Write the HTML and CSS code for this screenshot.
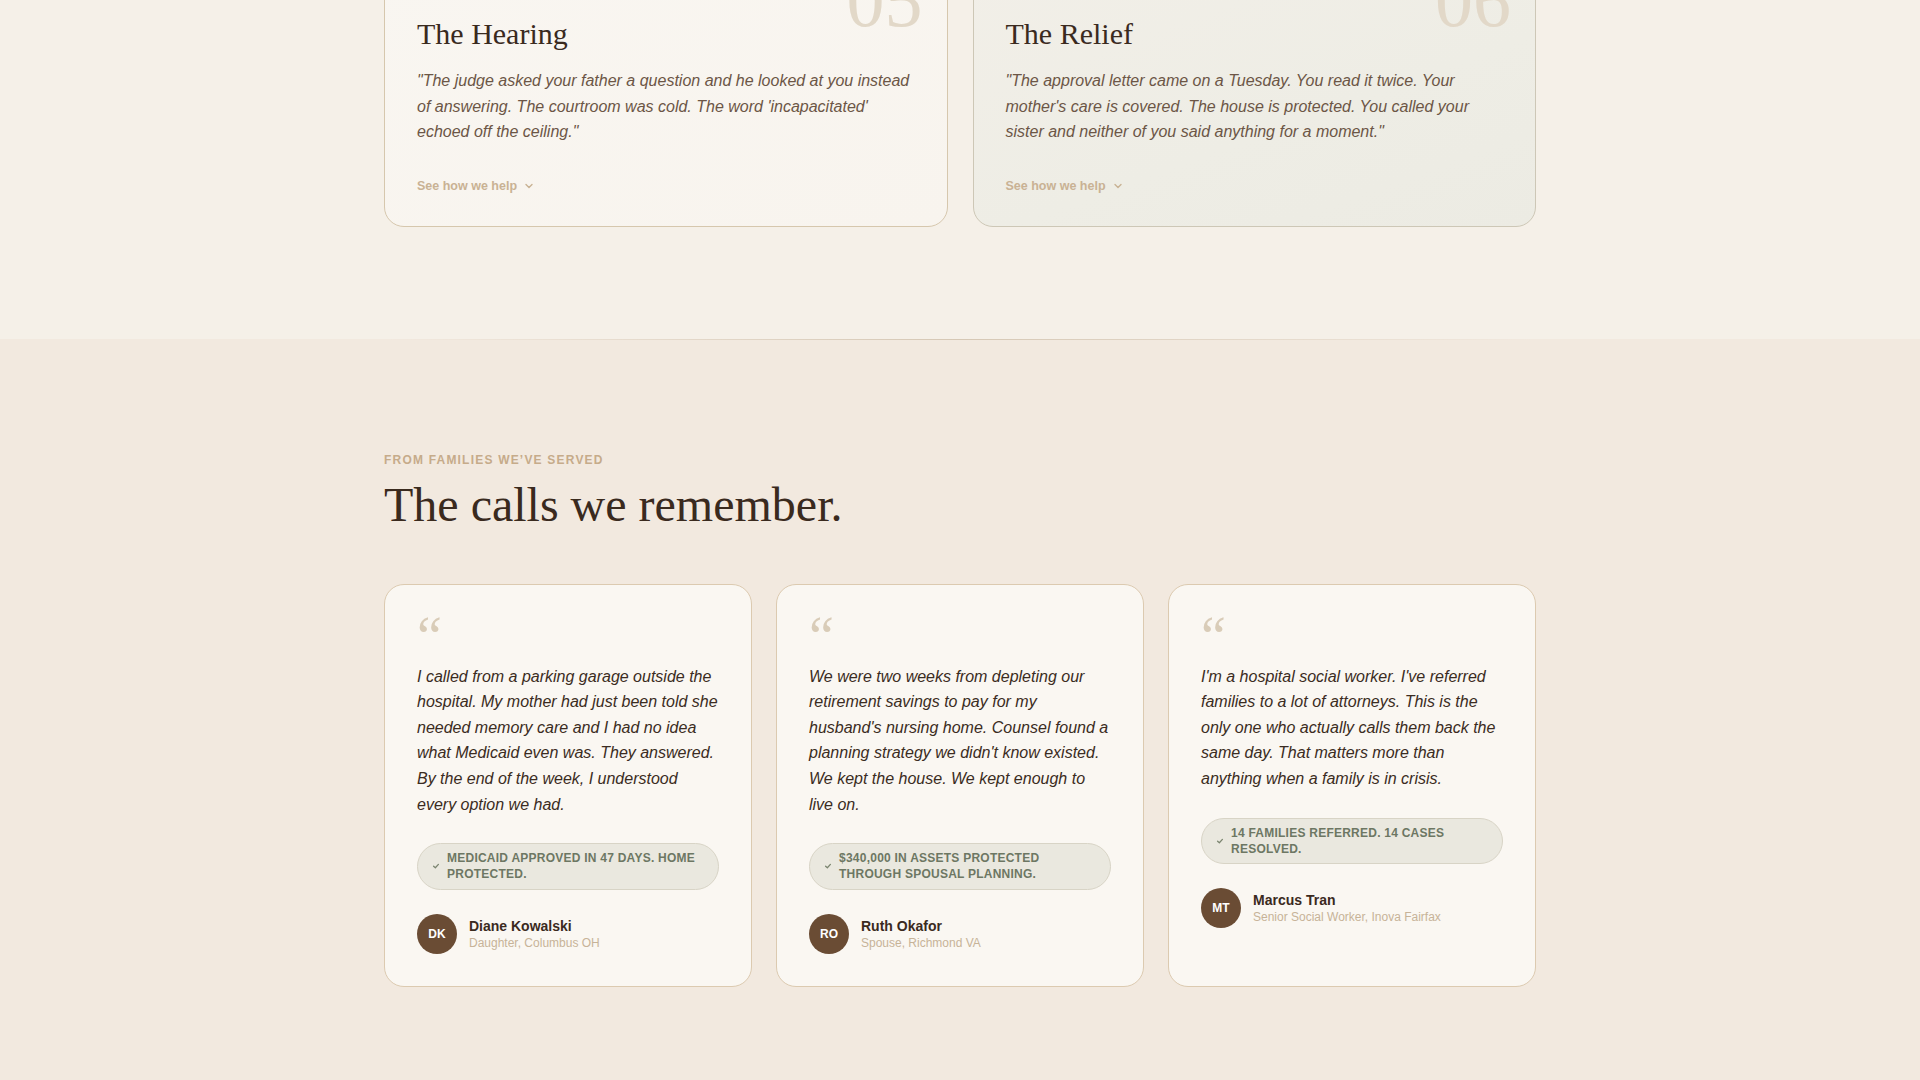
FILE: index.html
```html
<!DOCTYPE html>
<html lang="en">
<head>
<meta charset="utf-8">
<title>The calls we remember</title>
<link rel="stylesheet" href="styles.css">
</head>
<body>
<main class="page">
  <section class="journey">
    <div class="container journey-grid">
      <article class="stage-card">
        <span class="stage-num">05</span>
        <h3 class="stage-title">The Hearing</h3>
        <p class="stage-quote">"The judge asked your father a question and he looked at you instead of answering. The courtroom was cold. The word 'incapacitated' echoed off the ceiling."</p>
        <a class="stage-link" href="#">See how we help
          <svg class="chev" viewBox="0 0 10 10" width="10" height="10"><path d="M2 3.5 L5 6.5 L8 3.5" fill="none" stroke="currentColor" stroke-width="1.4" stroke-linecap="round" stroke-linejoin="round"/></svg>
        </a>
      </article>
      <article class="stage-card stage-card--relief">
        <span class="stage-num">06</span>
        <h3 class="stage-title">The Relief</h3>
        <p class="stage-quote">"The approval letter came on a Tuesday. You read it twice. Your mother's care is covered. The house is protected. You called your sister and neither of you said anything for a moment."</p>
        <a class="stage-link" href="#">See how we help
          <svg class="chev" viewBox="0 0 10 10" width="10" height="10"><path d="M2 3.5 L5 6.5 L8 3.5" fill="none" stroke="currentColor" stroke-width="1.4" stroke-linecap="round" stroke-linejoin="round"/></svg>
        </a>
      </article>
    </div>
  </section>

  <section class="voices">
    <div class="container">
      <p class="eyebrow">From families we’ve served</p>
      <h2 class="voices-title">The calls we remember.</h2>
      <div class="voices-grid">
        <article class="voice-card">
          <div class="qmark">“</div>
          <p class="voice-text">I called from a parking garage outside the hospital. My mother had just been told she needed memory care and I had no idea what Medicaid even was. They answered. By the end of the week, I understood every option we had.</p>
          <div class="outcome">
            <svg class="check" viewBox="0 0 10 10" width="8" height="8"><path d="M2 5.2 L4.2 7.2 L8 3" fill="none" stroke="currentColor" stroke-width="1.6" stroke-linecap="round" stroke-linejoin="round"/></svg>
            <span>Medicaid approved in 47 days. Home protected.</span>
          </div>
          <div class="person">
            <div class="avatar">DK</div>
            <div class="person-info">
              <div class="person-name">Diane Kowalski</div>
              <div class="person-role">Daughter, Columbus OH</div>
            </div>
          </div>
        </article>
        <article class="voice-card">
          <div class="qmark">“</div>
          <p class="voice-text">We were two weeks from depleting our retirement savings to pay for my husband's nursing home. Counsel found a planning strategy we didn't know existed. We kept the house. We kept enough to live on.</p>
          <div class="outcome">
            <svg class="check" viewBox="0 0 10 10" width="8" height="8"><path d="M2 5.2 L4.2 7.2 L8 3" fill="none" stroke="currentColor" stroke-width="1.6" stroke-linecap="round" stroke-linejoin="round"/></svg>
            <span>$340,000 in assets protected through spousal planning.</span>
          </div>
          <div class="person">
            <div class="avatar">RO</div>
            <div class="person-info">
              <div class="person-name">Ruth Okafor</div>
              <div class="person-role">Spouse, Richmond VA</div>
            </div>
          </div>
        </article>
        <article class="voice-card">
          <div class="qmark">“</div>
          <p class="voice-text">I'm a hospital social worker. I've referred families to a lot of attorneys. This is the only one who actually calls them back the same day. That matters more than anything when a family is in crisis.</p>
          <div class="outcome">
            <svg class="check" viewBox="0 0 10 10" width="8" height="8"><path d="M2 5.2 L4.2 7.2 L8 3" fill="none" stroke="currentColor" stroke-width="1.6" stroke-linecap="round" stroke-linejoin="round"/></svg>
            <span>14 families referred. 14 cases resolved.</span>
          </div>
          <div class="person">
            <div class="avatar">MT</div>
            <div class="person-info">
              <div class="person-name">Marcus Tran</div>
              <div class="person-role">Senior Social Worker, Inova Fairfax</div>
            </div>
          </div>
        </article>
      </div>
    </div>
  </section>
</main>
</body>
</html>
```

FILE: styles.css
```css
* { box-sizing: border-box; }

html, body {
  margin: 0;
  padding: 0;
}

body {
  background: #f2e9df;
  font-family: "Liberation Sans", Arial, sans-serif;
  color: #3a2a1e;
  overflow: hidden;
}

.container {
  width: 1152px;
  margin: 0 auto;
}

/* ---------- journey (top) ---------- */
.journey {
  background: #f5f0e8;
  margin-top: -49px;
  padding-bottom: 112px;
}

.journey-grid {
  display: grid;
  grid-template-columns: 1fr 1fr;
  gap: 25px;
}

.stage-card {
  position: relative;
  overflow: hidden;
  background: linear-gradient(160deg, #f9f6f1 0%, #f8f4ee 100%);
  border: 1px solid #d6c7ad;
  border-radius: 20px;
  padding: 64px 32px 31px;
}

.stage-card--relief {
  background: linear-gradient(160deg, #f2efe8 0%, #eeede5 60%, #ecebe3 100%);
  border-color: #cdc7b6;
}

.stage-num {
  position: absolute;
  top: 10px;
  right: 24px;
  font-family: "Liberation Serif", "Times New Roman", serif;
  font-size: 76px;
  line-height: 1;
  color: #e2d8c8;
}

.stage-title {
  margin: 0;
  font-family: "Liberation Serif", "Times New Roman", serif;
  font-weight: 400;
  font-size: 30px;
  line-height: 36px;
  color: #3a2a1e;
}

.stage-quote {
  margin: 16px 0 0;
  font-style: italic;
  font-size: 16px;
  line-height: 25.6px;
  color: #6c5646;
}

.stage-link {
  display: inline-flex;
  align-items: center;
  gap: 7px;
  margin-top: 32px;
  font-size: 12.5px;
  line-height: 18px;
  font-weight: 700;
  color: #c9b294;
  text-decoration: none;
}

.chev { display: block; }

/* ---------- voices ---------- */
.voices {
  position: relative;
  background: #f2e9df;
  padding: 113px 0 120px;
}

.voices::before {
  content: "";
  position: absolute;
  left: 0;
  right: 0;
  top: 0;
  height: 1px;
  background: linear-gradient(90deg, rgba(214,200,182,0) 20%, #d6c8b5 50%, rgba(214,200,182,0) 80%);
}

.eyebrow {
  margin: 0 0 11px;
  font-size: 12px;
  line-height: 16px;
  font-weight: 700;
  letter-spacing: 0.1em;
  text-transform: uppercase;
  color: #c6ab8a;
}

.voices-title {
  margin: 0 0 52px;
  font-family: "Liberation Serif", "Times New Roman", serif;
  font-weight: 400;
  font-size: 48px;
  line-height: 1.1;
  color: #3a2a1e;
}

.voices-grid {
  display: grid;
  grid-template-columns: repeat(3, 1fr);
  gap: 24px;
  align-items: stretch;
}

.voice-card {
  background: #faf7f2;
  border: 1px solid #dccab0;
  border-radius: 20px;
  padding: 31px 32px 32px;
}

.qmark {
  height: 40px;
  font-family: "Liberation Serif", "Times New Roman", serif;
  font-size: 56px;
  line-height: 40px;
  color: #d9ccb8;
  margin-bottom: 8px;
}

.voice-text {
  margin: 0;
  font-style: italic;
  font-size: 16px;
  line-height: 25.6px;
  color: #3b2c22;
}

.outcome {
  display: flex;
  align-items: center;
  gap: 7px;
  margin-top: 26px;
  padding: 6px 16px 6px 14px;
  background: #eae8df;
  border: 1px solid #d8d4c6;
  border-radius: 999px;
  font-size: 12px;
  line-height: 16.2px;
  font-weight: 700;
  letter-spacing: 0.02em;
  text-transform: uppercase;
  color: #6d7763;
}

.check {
  flex: none;
  color: #7b8570;
}

.person {
  display: flex;
  align-items: center;
  gap: 12px;
  margin-top: 24px;
}

.avatar {
  flex: none;
  width: 40px;
  height: 40px;
  border-radius: 50%;
  background: #6a4c34;
  color: #fff;
  display: flex;
  align-items: center;
  justify-content: center;
  font-size: 12px;
  font-weight: 700;
}

.person-name {
  font-size: 14px;
  line-height: 18px;
  font-weight: 700;
  color: #3a2a1e;
}

.person-role {
  font-size: 12px;
  line-height: 16px;
  color: #c7b398;
}
```
